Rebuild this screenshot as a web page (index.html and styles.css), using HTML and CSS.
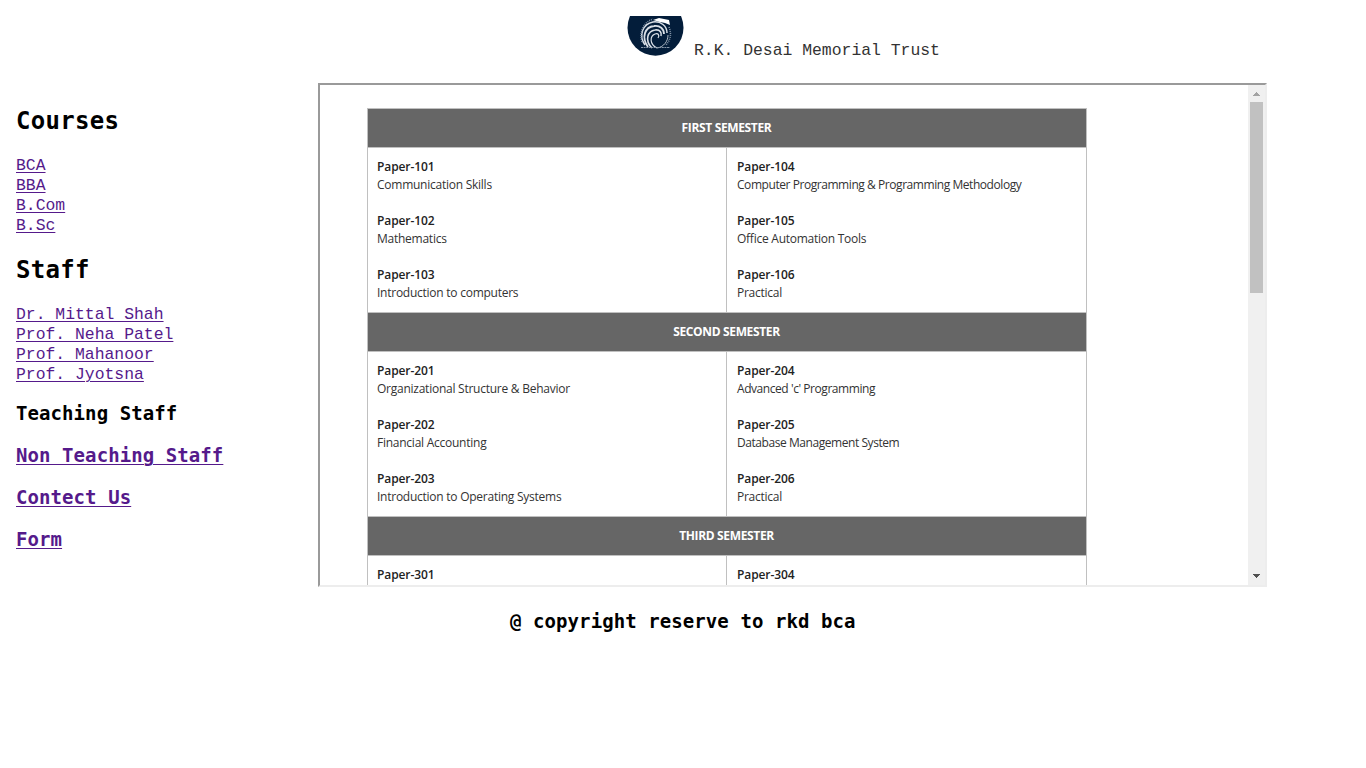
FILE: index.html
```html
<!DOCTYPE html>
<html lang="en">
<head>
<meta charset="utf-8">
<title>R.K. Desai Memorial Trust</title>
<link rel="stylesheet" href="styles.css">
</head>
<body>
<header class="banner">
  <svg class="logo" width="57" height="40" viewBox="0 0 57 40">
    <circle cx="28.5" cy="11.7" r="28" fill="#031d3a"/>
    <g fill="none" stroke="#d9dfe6">
      <path d="M18 29C11 19 16 8 26 6C34 5 40 10 40 17" stroke-width="1.5"/>
      <path d="M21 31C14 21 18 11 27 10C33 9 37 13 37 18" stroke-width="1.8"/>
      <path d="M25 32C17 24 21 15 28 14C33 13 35 17 34 20" stroke-width="1.6"/>
      <path d="M30 32C22 28 23 20 28 18C31 17 33 19 31 22" stroke-width="1.2"/>
      <path d="M30 32C37 31 41 25 41 19" stroke-width=".8"/>
      <path d="M15 26C12 15 17 6 26 3" stroke="#8293a6" stroke-width="1.6" stroke-dasharray="1 1"/>
      <path d="M42 11C45 19 43 24 39 29" stroke="#8293a6" stroke-width="1.6" stroke-dasharray="1 1"/>
      <path d="M14 31.5H43" stroke="#8796a8" stroke-width="1.2" stroke-dasharray="2 .6"/>
    </g>
    <path d="M26 4L32 2L42 4L43 9L38 7L33 6Z" fill="#fff"/>
  </svg>
  <span class="trust">R.K. Desai Memorial Trust</span>
</header>
<main class="content">
  <nav class="side">
    <h2>Courses</h2>
    <a href="#">BCA</a><a href="#">BBA</a><a href="#">B.Com</a><a href="#">B.Sc</a>
    <h2>Staff</h2>
    <a href="#">Dr. Mittal Shah</a><a href="#">Prof. Neha Patel</a><a href="#">Prof. Mahanoor</a><a href="#">Prof. Jyotsna</a>
    <h3>Teaching Staff</h3>
    <h3><a href="#">Non Teaching Staff</a></h3>
    <h3><a href="#">Contect Us</a></h3>
    <h3><a href="#">Form</a></h3>
  </nav>
  <section class="frame">
    <div class="page">
      <div class="syllabus">
        <div class="sem">FIRST SEMESTER</div>
        <div class="cell"><b>Paper-101</b><p>Communication Skills</p><b>Paper-102</b><p>Mathematics</p><b>Paper-103</b><p>Introduction to computers</p></div>
        <div class="cell right"><b>Paper-104</b><p class="long">Computer Programming &amp; Programming Methodology</p><b>Paper-105</b><p>Office Automation Tools</p><b>Paper-106</b><p>Practical</p></div>
        <div class="sem">SECOND SEMESTER</div>
        <div class="cell"><b>Paper-201</b><p>Organizational Structure &amp; Behavior</p><b>Paper-202</b><p>Financial Accounting</p><b>Paper-203</b><p>Introduction to Operating Systems</p></div>
        <div class="cell right"><b>Paper-204</b><p class="long">Advanced 'c' Programming</p><b>Paper-205</b><p class="long">Database Management System</p><b>Paper-206</b><p>Practical</p></div>
        <div class="sem">THIRD SEMESTER</div>
        <div class="cell"><b>Paper-301</b></div>
        <div class="cell right"><b>Paper-304</b></div>
      </div>
    </div>
    <div class="scrollbar">
      <svg width="17" height="17" viewBox="0 0 17 17" shape-rendering="crispEdges"><path d="M8 7h1v1h1v1h1v1h1v1H5v-1h1V9h1V8h1z" fill="#a3a3a3"/></svg>
      <div class="thumb"></div>
      <svg class="down" width="17" height="17" viewBox="0 0 17 17" shape-rendering="crispEdges"><path d="M5 6h7v1h-1v1h-1v1H9v1H8V9H7V8H6V7H5z" fill="#505050"/></svg>
    </div>
  </section>
</main>
<footer class="foot">@ copyright reserve to rkd bca</footer>
</body>
</html>
```
FILE: styles.css
```css
* { box-sizing: border-box; }
body { margin: 0; background: #fff; color: #000; font-family: "Liberation Mono", monospace; font-size: 16.4px; line-height: 20px; overflow: hidden; }
.banner { display: flex; height: 83px; padding: 16px 0 0 627px; }
.logo { display: block; }
.trust { margin: 25px 0 0 10px; color: #333; white-space: pre; }
.content { display: flex; height: 504px; }
.side { width: 318px; padding: 22px 0 0 16px; }
.side > a { display: block; width: max-content; }
.side a { color: #551a8b; text-decoration: underline; text-decoration-thickness: 1px; text-underline-offset: 2px; }
h2, h3, .foot { font-family: "DejaVu Sans Mono", monospace; font-weight: bold; }
h2 { margin: 0 0 18px; font-size: 24px; line-height: 33px; letter-spacing: .3px; }
.side > a + h2 { margin-top: 18px; }
h3 { margin: 0 0 18px; font-size: 19px; line-height: 24px; letter-spacing: .08px; }
.side > a + h3 { margin-top: 16px; }
.frame { display: flex; width: 949px; height: 504px; border: 2px solid; border-color: #9a9a9a #ededed #ededed #9a9a9a; }
.page { flex: 1; overflow: hidden; padding: 23px 0 0 47px; }
.syllabus { display: grid; grid-template-columns: 359px 360px; width: 720px; border: solid #c0c0c0; border-width: 1px 0 0 1px; font-family: "Open Sans", sans-serif; font-size: 12px; line-height: 18px; color: #333; letter-spacing: -.25px; }
.sem { grid-column: 1 / 3; height: 39px; padding: 10px 11px 10px 10px; border: solid #c0c0c0; border-width: 0 1px 1px 0; background: #666; color: #fff; font-weight: 700; text-align: center; letter-spacing: -.35px; }
.cell { height: 165px; padding: 10px 9px; border: solid #c0c0c0; border-width: 0 1px 1px 0; }
.cell.right { padding-left: 10px; }
.cell b { display: block; font-weight: 600; color: #222; letter-spacing: -.1px; }
.cell p { margin: 0 0 18px; white-space: nowrap; }
.cell .long { letter-spacing: -.44px; }
.scrollbar { display: flex; flex-direction: column; width: 17px; background: #f0f0f0; }
.thumb { width: 13px; height: 191px; margin-left: 2px; background: #c1c1c1; }
.down { margin-top: auto; }
.foot { padding: 22px 0 0 510px; font-size: 19px; line-height: 24px; letter-spacing: .08px; white-space: nowrap; }
```
